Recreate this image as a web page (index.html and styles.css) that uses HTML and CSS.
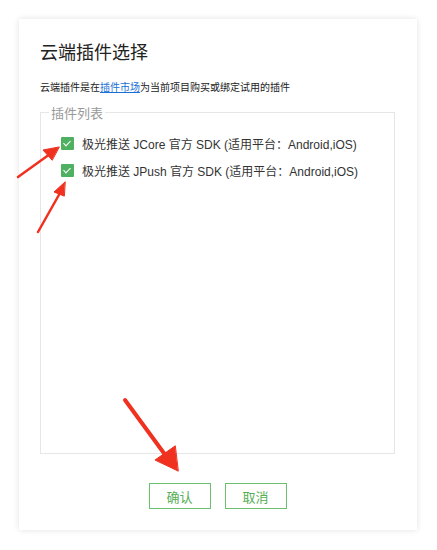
FILE: index.html
```html
<!DOCTYPE html>
<html lang="zh-CN">
<head>
  <meta charset="UTF-8" />
  <title>云端插件选择</title>
  <link rel="stylesheet" href="styles.css">
</head>
<body>

  <div class="card">
    <h2>云端插件选择</h2>
    <p class="desc">云端插件是在<a href="#">插件市场</a>为当前项目购买或绑定试用的插件</p>

    <fieldset class="plugins">
      <legend>插件列表</legend>
      <label class="plugin">
        <span class="check"></span>
        <span>极光推送 JCore 官方 SDK (适用平台：Android,iOS)</span>
      </label>
      <label class="plugin">
        <span class="check"></span>
        <span>极光推送 JPush 官方 SDK (适用平台：Android,iOS)</span>
      </label>
    </fieldset>

    <div class="actions">
      <button>确认</button>
      <button>取消</button>
    </div>

    <!-- annotation arrows drawn over the dialog -->
    <svg class="arrows" width="437" height="550" viewBox="0 0 437 550">
      <g fill="#f0311f" stroke="#f0311f" stroke-linecap="round">
        <line x1="18" y1="177" x2="50" y2="154" stroke-width="2.5" />
        <polygon points="59,147 43,150 52,160" />
        <line x1="38" y1="232" x2="60" y2="193" stroke-width="2.5" />
        <polygon points="65,182 54,192 64,196" />
        <line x1="125" y1="400" x2="166" y2="456" stroke-width="4" />
        <polygon points="178,471 155,460 175,446" />
      </g>
    </svg>
  </div>

</body>
</html>
```

FILE: styles.css
```css
body {
  font-family: "Liberation Sans", "Noto Sans CJK SC", sans-serif;
  background-color: #fff;
  margin: 0;
  padding: 19px 20px 20px 19px;
}

.card {
  background: white;
  width: 398px;
  height: 511px;
  box-sizing: border-box;
  padding: 22px 22px 0 21px;
  box-shadow: 0 0 6px rgba(0, 0, 0, 0.12);
  display: flex;
  flex-direction: column;
}

.card h2 {
  margin: 0;
  font-size: 18px;
  font-weight: normal;
  color: #222;
  line-height: 24px;
}

.desc {
  margin: 15px 0 0;
  font-size: 10px;
  color: #222;
  line-height: 16px;
}

.desc a {
  color: #1a6fd6;
  text-decoration: underline;
}

.plugins {
  margin: 7px 0 0;
  padding: 8px 0 0 20px;
  border: 1px solid #e6e6e6;
  height: 351px;
  box-sizing: border-box;
}

.plugins legend {
  font-size: 13px;
  color: #999;
  padding: 0 2px;
  margin-left: -12px;
}

.plugin {
  display: flex;
  align-items: center;
  gap: 8px;
  font-size: 12px;
  color: #333;
  height: 27px;
}

.check {
  width: 13px;
  height: 13px;
  background: #4fb061;
  border-radius: 1px;
  position: relative;
  flex: none;
}

.check::after {
  content: "";
  position: absolute;
  left: 4px;
  top: 2px;
  width: 3px;
  height: 6px;
  border: solid white;
  border-width: 0 1.5px 1.5px 0;
  transform: rotate(45deg);
}

.actions {
  display: flex;
  justify-content: center;
  gap: 14px;
  margin-top: 29px;
}

.actions button {
  width: 62px;
  height: 26px;
  background: white;
  border: 1px solid #6cbf6c;
  color: #55ae55;
  font-family: inherit;
  font-size: 13px;
  cursor: pointer;
}

.arrows {
  position: absolute;
  left: 0;
  top: 0;
  pointer-events: none;
}
```
